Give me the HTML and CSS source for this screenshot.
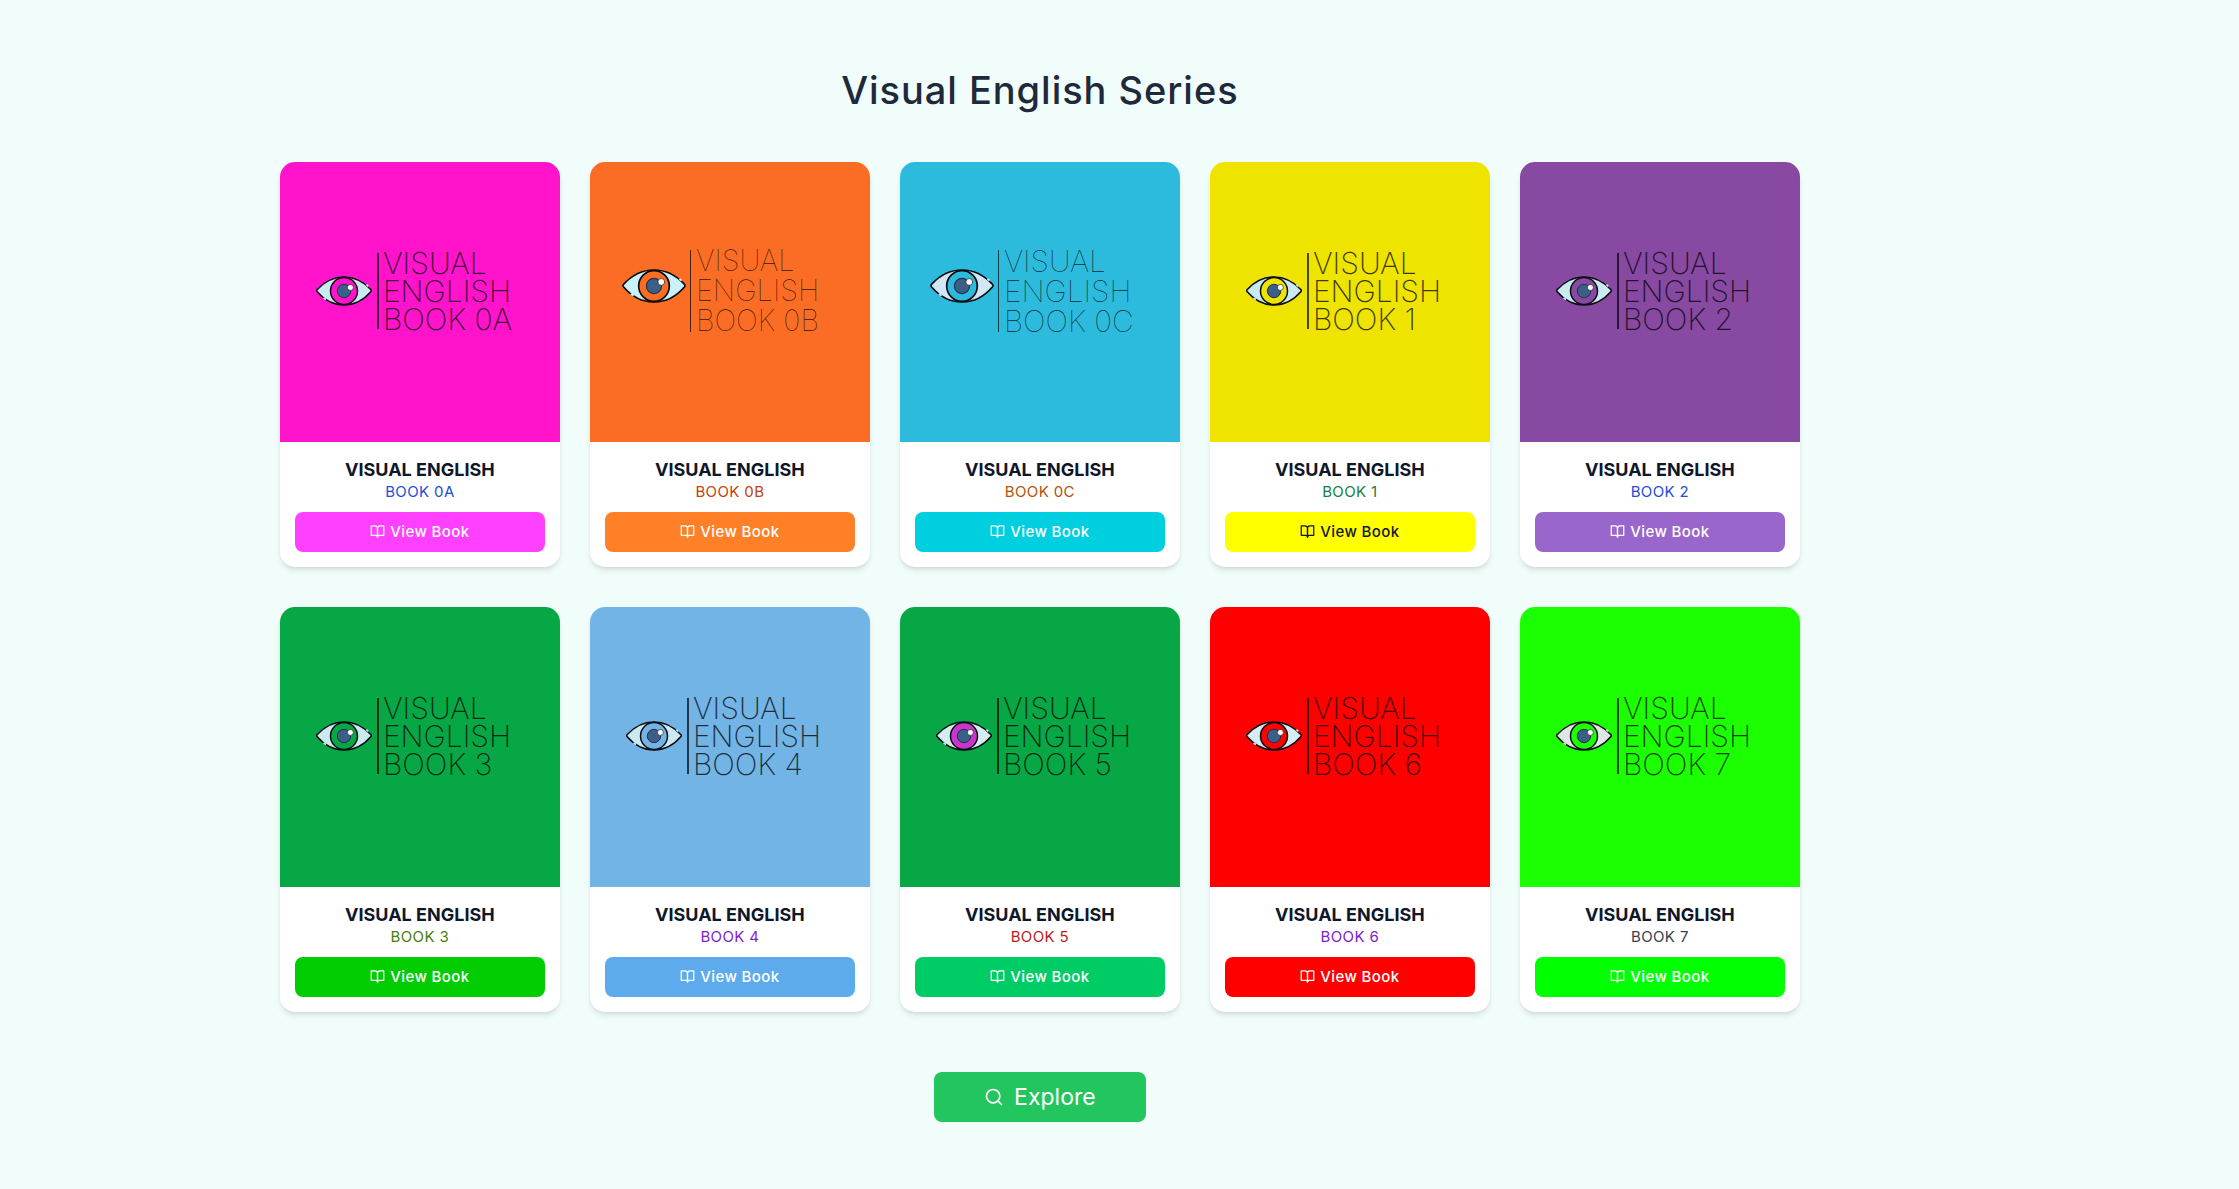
FILE: index.html
```
<!DOCTYPE html>
<html lang="en">
<head>
<meta charset="utf-8">
<meta name="viewport" content="width=device-width, initial-scale=1">
<title>Visual English Series</title>
<link rel="stylesheet" href="styles.css">
</head>
<body>
<svg class="sprite" aria-hidden="true">
  <symbol id="eye" viewBox="0 0 56 30">
    <path class="eye-white" d="M1 15.600Q0.200 14.500 1.300 13.400C9 5 18 0.900 28 0.900S47 5 54.700 13.400Q55.800 14.500 55 15.600C47 25 38 29.100 28 29.100S9 25 1 15.600Z"/>
    <circle class="eye-iris" cx="28" cy="15" r="13.500"/>
    <circle class="eye-pupil" cx="28" cy="15" r="6.700"/>
    <circle class="eye-glint" cx="34.400" cy="11.400" r="3"/>
    <path class="eye-gap" d="M7.500 22l2.500 1.500M50.500 8.700l1.800 1.600"/>
  </symbol>
  <symbol id="book" viewBox="0 0 24 24">
    <path d="M2 3h6a4 4 0 0 1 4 4v14a3 3 0 0 0-3-3H2z"/>
    <path d="M22 3h-6a4 4 0 0 0-4 4v14a3 3 0 0 1 3-3h7z"/>
  </symbol>
  <symbol id="search" viewBox="0 0 24 24">
    <circle cx="11" cy="11" r="8"/>
    <path d="m21 21-4.300-4.300"/>
  </symbol>
</svg>
<main class="page">
  <h1 class="heading">Visual English Series</h1>
  <div class="grid">
    <article class="card book-0a">
      <div class="cover"><svg class="eye"><use href="#eye"/></svg><p class="cover-text">VISUAL<br>ENGLISH<br>BOOK 0A</p></div>
      <div class="info"><h2 class="title">VISUAL ENGLISH</h2><p class="level">BOOK 0A</p><button class="view" type="button"><svg class="icon"><use href="#book"/></svg>View Book</button></div>
    </article>
    <article class="card book-0b">
      <div class="cover cover-large"><svg class="eye"><use href="#eye"/></svg><p class="cover-text">VISUAL<br>ENGLISH<br>BOOK 0B</p></div>
      <div class="info"><h2 class="title">VISUAL ENGLISH</h2><p class="level">BOOK 0B</p><button class="view" type="button"><svg class="icon"><use href="#book"/></svg>View Book</button></div>
    </article>
    <article class="card book-0c">
      <div class="cover cover-large"><svg class="eye"><use href="#eye"/></svg><p class="cover-text">VISUAL<br>ENGLISH<br>BOOK 0C</p></div>
      <div class="info"><h2 class="title">VISUAL ENGLISH</h2><p class="level">BOOK 0C</p><button class="view" type="button"><svg class="icon"><use href="#book"/></svg>View Book</button></div>
    </article>
    <article class="card book-1">
      <div class="cover"><svg class="eye"><use href="#eye"/></svg><p class="cover-text">VISUAL<br>ENGLISH<br>BOOK 1</p></div>
      <div class="info"><h2 class="title">VISUAL ENGLISH</h2><p class="level">BOOK 1</p><button class="view" type="button"><svg class="icon"><use href="#book"/></svg>View Book</button></div>
    </article>
    <article class="card book-2">
      <div class="cover"><svg class="eye"><use href="#eye"/></svg><p class="cover-text">VISUAL<br>ENGLISH<br>BOOK 2</p></div>
      <div class="info"><h2 class="title">VISUAL ENGLISH</h2><p class="level">BOOK 2</p><button class="view" type="button"><svg class="icon"><use href="#book"/></svg>View Book</button></div>
    </article>
    <article class="card book-3">
      <div class="cover"><svg class="eye"><use href="#eye"/></svg><p class="cover-text">VISUAL<br>ENGLISH<br>BOOK 3</p></div>
      <div class="info"><h2 class="title">VISUAL ENGLISH</h2><p class="level">BOOK 3</p><button class="view" type="button"><svg class="icon"><use href="#book"/></svg>View Book</button></div>
    </article>
    <article class="card book-4">
      <div class="cover"><svg class="eye"><use href="#eye"/></svg><p class="cover-text">VISUAL<br>ENGLISH<br>BOOK 4</p></div>
      <div class="info"><h2 class="title">VISUAL ENGLISH</h2><p class="level">BOOK 4</p><button class="view" type="button"><svg class="icon"><use href="#book"/></svg>View Book</button></div>
    </article>
    <article class="card book-5">
      <div class="cover"><svg class="eye"><use href="#eye"/></svg><p class="cover-text">VISUAL<br>ENGLISH<br>BOOK 5</p></div>
      <div class="info"><h2 class="title">VISUAL ENGLISH</h2><p class="level">BOOK 5</p><button class="view" type="button"><svg class="icon"><use href="#book"/></svg>View Book</button></div>
    </article>
    <article class="card book-6">
      <div class="cover"><svg class="eye"><use href="#eye"/></svg><p class="cover-text">VISUAL<br>ENGLISH<br>BOOK 6</p></div>
      <div class="info"><h2 class="title">VISUAL ENGLISH</h2><p class="level">BOOK 6</p><button class="view" type="button"><svg class="icon"><use href="#book"/></svg>View Book</button></div>
    </article>
    <article class="card book-7">
      <div class="cover"><svg class="eye"><use href="#eye"/></svg><p class="cover-text">VISUAL<br>ENGLISH<br>BOOK 7</p></div>
      <div class="info"><h2 class="title">VISUAL ENGLISH</h2><p class="level">BOOK 7</p><button class="view" type="button"><svg class="icon"><use href="#book"/></svg>View Book</button></div>
    </article>
  </div>
  <button class="explore" type="button"><svg class="icon icon-large"><use href="#search"/></svg>Explore</button>
</main>
</body>
</html>
```
FILE: styles.css
```
* { box-sizing: border-box; }

body {
  margin: 0;
  background: #f0fdfa;
  color: #0f172a;
  font-family: Inter, "Liberation Sans", sans-serif;
}

h1, h2, p { margin: 0; }
button { border: 0; font-family: inherit; cursor: pointer; }
.sprite { position: absolute; width: 0; height: 0; }

.page {
  display: flex;
  flex-direction: column;
  align-items: center;
  max-width: 1520px;
  margin-left: 12.5%;
  padding: 60px 0;
}

.heading {
  margin-bottom: 42px;
  color: #1e293b;
  font-size: 38px;
  font-weight: 500;
  line-height: 60px;
  letter-spacing: 0.025em;
}

.grid {
  display: grid;
  grid-template-columns: repeat(5, 1fr);
  gap: 40px 30px;
  width: 100%;
  margin-bottom: 60px;
}

.card {
  --iris: var(--cover);
  --white: #cbe9f1;
  overflow: hidden;
  border-radius: 15px;
  background: #fff;
  box-shadow: 0 4px 6px -1px rgb(0 0 0 / 0.1), 0 2px 4px -2px rgb(0 0 0 / 0.1);
}

.cover {
  display: flex;
  align-items: center;
  gap: 5px;
  aspect-ratio: 1;
  padding: 0 0 23px 36px;
  background: var(--cover);
}
.eye { flex: none; width: 56px; height: 30px; }
.eye-white { fill: var(--white); stroke: #0b0d12; stroke-width: 1.5; }
.eye-iris { fill: var(--iris); stroke: #0b0d12; stroke-width: 1.5; }
.eye-pupil { fill: #3c5f88; stroke: #22304a; stroke-width: 1; }
.eye-glint { fill: #fff; stroke: #0b0d12; stroke-width: 0.6; }
.eye-gap { fill: none; stroke: var(--white); stroke-width: 1.6; }

.cover-text {
  position: relative;
  padding-left: 6px;
  color: rgb(0 0 0 / 0.75);
  font-size: 30px;
  font-weight: 200;
  line-height: 28px;
  white-space: nowrap;
}
.cover-text::before {
  content: "";
  position: absolute;
  inset: 4px auto 4px 0;
  width: 2px;
  background: rgb(0 0 0 / 0.7);
}

.cover-large { gap: 4px; padding-left: 32px; }
.cover-large .eye { width: 64px; height: 34px; margin-bottom: 10px; }
.cover-large .cover-text { color: rgb(0 0 0 / 0.8); font-size: 29px; font-weight: 100; line-height: 30px; }
.cover-large .cover-text::before { width: 1px; }
.book-0c .cover-large { padding-left: 30px; }
.book-0c .cover-text { font-size: 30px; }

.info {
  display: flex;
  flex-direction: column;
  padding: 15px;
  text-align: center;
}
.title { font-size: 18px; font-weight: 700; line-height: 25px; }
.level { color: var(--level); font-size: 15px; line-height: 20px; letter-spacing: 0.025em; }

.view {
  display: flex;
  align-items: center;
  justify-content: center;
  gap: 5px;
  height: 40px;
  margin-top: 10px;
  padding: 0 0 1px;
  border-radius: 8px;
  background: var(--button);
  color: #fff;
  font-size: 15px;
  font-weight: 500;
  letter-spacing: 0.025em;
}
.icon {
  width: 15px;
  height: 15px;
  fill: none;
  stroke: currentColor;
  stroke-width: 2;
  stroke-linecap: round;
  stroke-linejoin: round;
}
.icon-large { width: 20px; height: 20px; }

.explore {
  display: flex;
  align-items: center;
  gap: 10px;
  height: 50px;
  padding: 0 50px;
  border-radius: 8px;
  background: #22c55e;
  color: #fff;
  font-size: 23px;
}

.book-0a { --cover: #ff14cc; --level: #1d4ed8; --button: #ff40ff; }
.book-0b { --cover: #fb6d24; --level: #c2410c; --button: #ff8026; --white: #c9f3f8; }
.book-0c { --cover: #2cbbdd; --level: #b45309; --button: #00cfe0; --white: #d3e6f6; }
.book-1 { --cover: #efe400; --level: #15803d; --button: #ffff00; }
.book-1 .view { color: #0f172a; }
.book-2 { --cover: #8849a3; --level: #1d4ed8; --button: #9966cc; }
.book-3 { --cover: #07a745; --level: #4d7c0f; --button: #00cc00; }
.book-4 { --cover: #73b4e7; --level: #7e22ce; --button: #5dabec; }
.book-5 { --cover: #07a745; --level: #b91c1c; --button: #00cc66; --iris: #c936cc; --white: #d3edf1; }
.book-6 { --cover: #ff0000; --level: #7e22ce; --button: #ff0000; --white: #d6edf3; }
.book-7 { --cover: #1cff03; --level: #374151; --button: #00ff00; --white: #dfe5e7; }

@media (max-width: 1500px) {
  .page { margin-left: 0; max-width: none; padding: 60px 30px; }
  .grid { grid-template-columns: repeat(auto-fit, minmax(280px, 1fr)); }
}
```
